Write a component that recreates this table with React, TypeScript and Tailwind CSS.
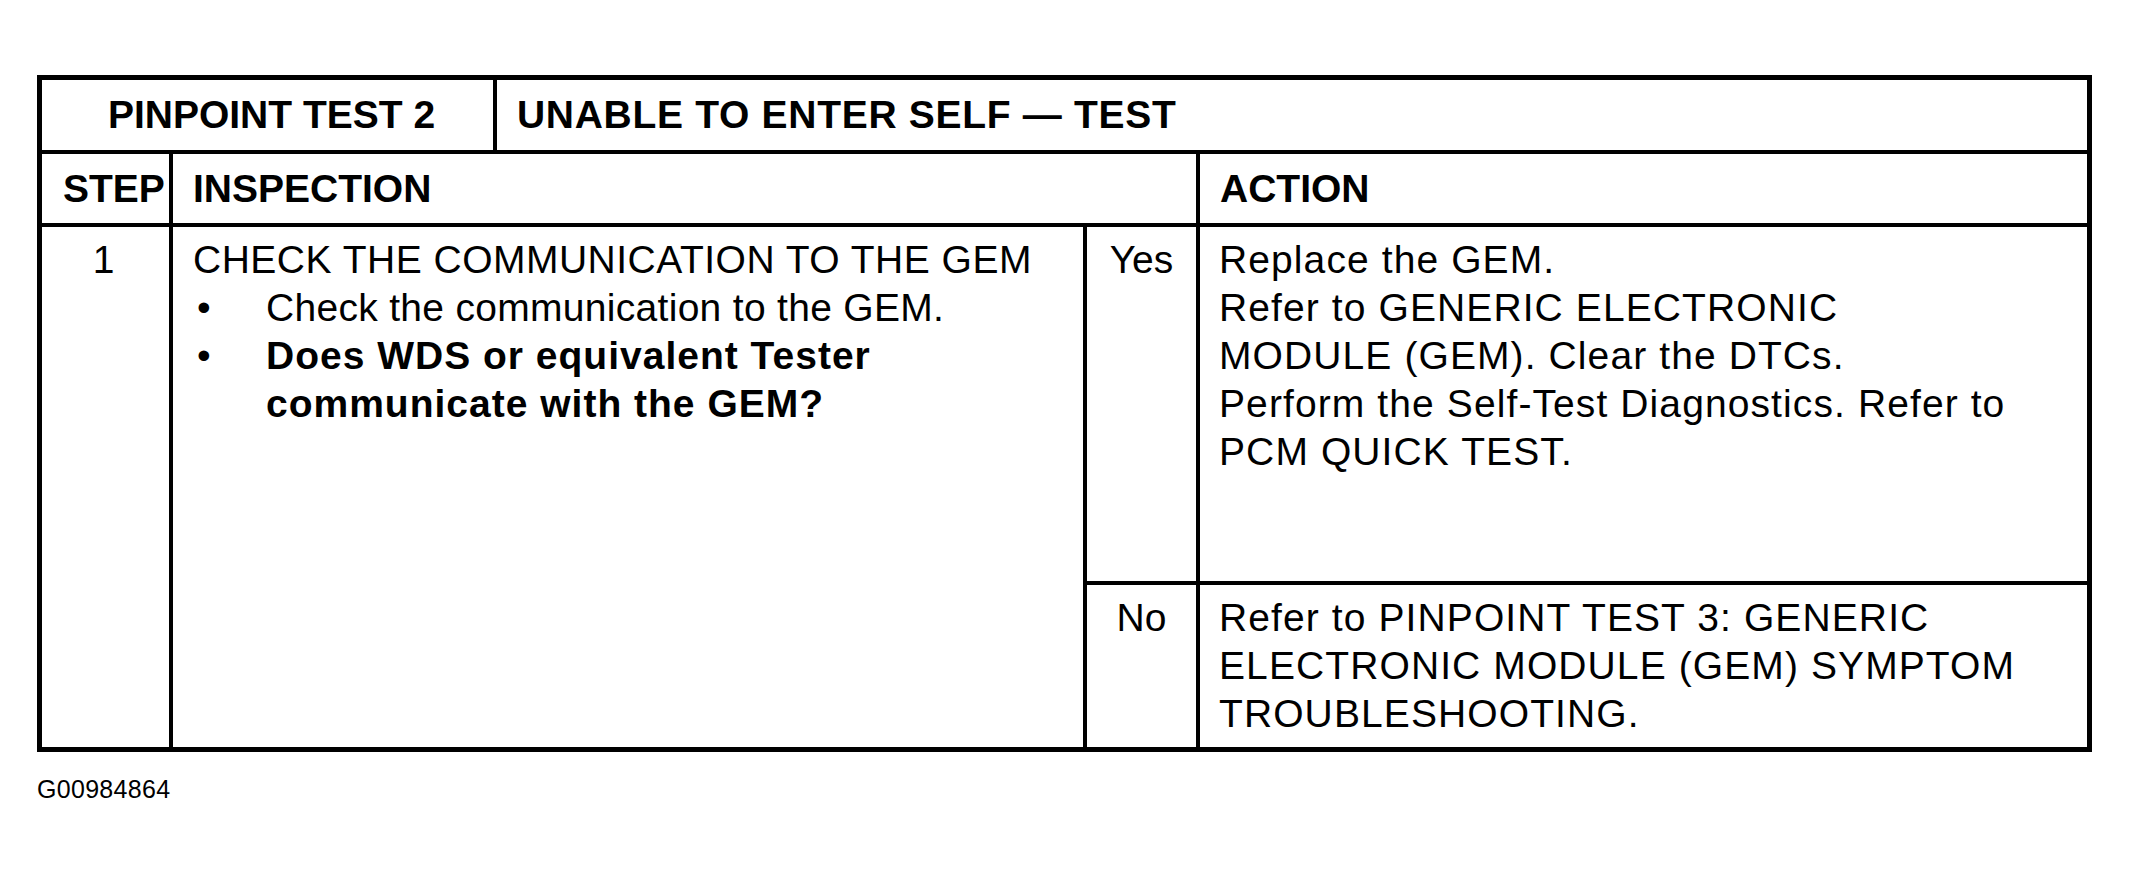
const font = "font-['Liberation_Sans',Arial,sans-serif]";

function Bullet({ children, bold = false }: { children: React.ReactNode; bold?: boolean }) {
  return (
    <div className="flex">
      <span className="w-[73px] shrink-0 pl-[4px] tracking-normal">•</span>
      <span className={bold ? 'font-bold tracking-[1px]' : 'tracking-[0.3px]'}>{children}</span>
    </div>
  );
}

export default function App() {
  return (
    <div className={`min-h-screen w-full bg-white text-black ${font}`}>
      <div className="pl-[37px] pt-[75px]">
        {/* Table */}
        <div className="w-[2055px] border-[5px] border-black text-[39px] leading-[48px]">
          {/* Title row */}
          <div className="flex h-[74px] border-b-4 border-black font-bold">
            <div className="flex w-[455px] items-center justify-center border-r-4 border-black pl-[8px]">
              PINPOINT TEST 2
            </div>
            <div className="flex flex-1 items-center pl-[20px] tracking-[0.7px]">UNABLE TO ENTER SELF — TEST</div>
          </div>

          {/* Column heads */}
          <div className="flex h-[73px] border-b-4 border-black font-bold">
            <div className="flex w-[131px] items-center border-r-4 border-black pl-[21px]">STEP</div>
            <div className="flex w-[1027px] items-center border-r-4 border-black pl-[20px]">INSPECTION</div>
            <div className="flex flex-1 items-center pl-[20px]">ACTION</div>
          </div>

          {/* Step 1 */}
          <div className="flex h-[520px]">
            <div className="w-[131px] border-r-4 border-black pt-[9px] pr-[4px] text-center">1</div>
            <div className="w-[914px] border-r-4 border-black pl-[20px] pt-[9px]">
              <div className="tracking-[0.5px]">CHECK THE COMMUNICATION TO THE GEM</div>
              <Bullet>Check the communication to the GEM.</Bullet>
              <Bullet bold>
                Does WDS or equivalent Tester
                <br />
                communicate with the GEM?
              </Bullet>
            </div>
            <div className="flex flex-1 flex-col">
              <div className="flex h-[358px] border-b-4 border-black">
                <div className="w-[113px] border-r-4 border-black pt-[9px] text-center">Yes</div>
                <div className="flex-1 pl-[19px] pt-[9px] tracking-[1.1px]">
                  <div>Replace the GEM.</div>
                  <div>Refer to GENERIC ELECTRONIC</div>
                  <div>MODULE (GEM). Clear the DTCs.</div>
                  <div>Perform the Self-Test Diagnostics. Refer to</div>
                  <div>PCM QUICK TEST.</div>
                </div>
              </div>
              <div className="flex flex-1">
                <div className="w-[113px] border-r-4 border-black pt-[9px] text-center">No</div>
                <div className="flex-1 pl-[19px] pt-[9px] tracking-[1.1px]">
                  <div>Refer to PINPOINT TEST 3: GENERIC</div>
                  <div>ELECTRONIC MODULE (GEM) SYMPTOM</div>
                  <div>TROUBLESHOOTING.</div>
                </div>
              </div>
            </div>
          </div>
        </div>

        {/* Figure id */}
        <div className="mt-[23px] text-[25px] leading-[29px] tracking-[0.3px]">G00984864</div>
      </div>
    </div>
  );
}
